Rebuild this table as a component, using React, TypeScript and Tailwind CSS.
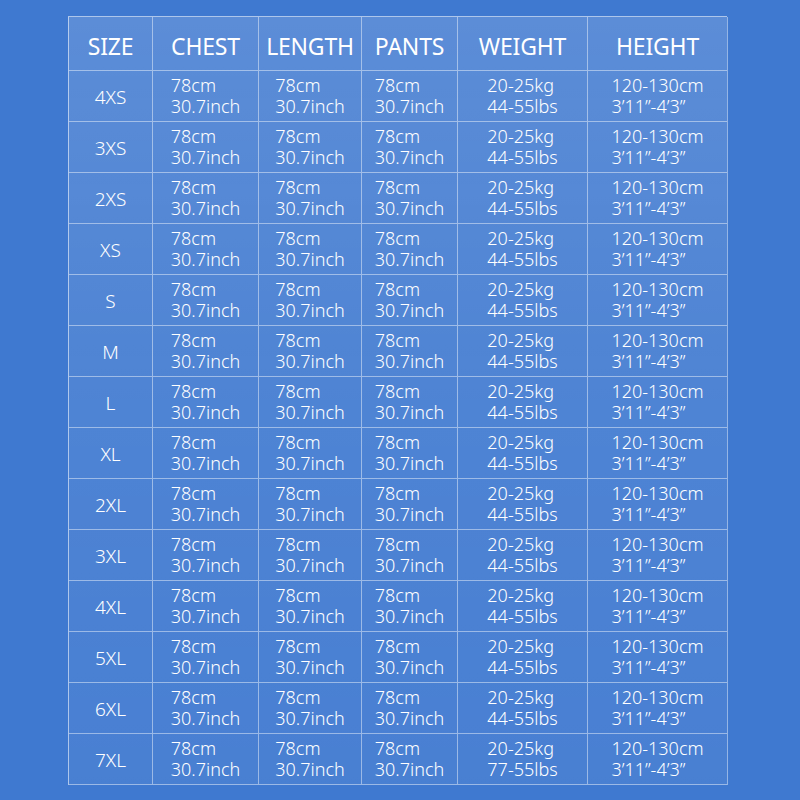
import React from "react";

const HEADERS = ["SIZE", "CHEST", "LENGTH", "PANTS", "WEIGHT", "HEIGHT"];
const SIZES = ["4XS", "3XS", "2XS", "XS", "S", "M", "L", "XL", "2XL", "3XL", "4XL", "5XL", "6XL", "7XL"];

const cell = "flex items-center justify-center border-r border-b border-white/45";

function Pair({ a, b }: { a: string; b: string }) {
  return (
    <div className="text-left leading-[21px]">
      {a}
      <br />
      {b}
    </div>
  );
}

export default function App() {
  return (
    <div
      className="w-[800px] h-[800px] bg-[#3f79d0] pt-[16px] pl-[68px] text-white font-light"
      style={{ fontFamily: '"Noto Sans", "Open Sans", sans-serif' }}
    >
      <div className="grid w-[659px] grid-cols-[84px_106px_103px_96px_130px_140px] grid-rows-[54px_repeat(14,51px)] border-l border-t border-white/55 bg-gradient-to-b from-white/15 via-white/8 to-white/5">
        {HEADERS.map((h) => (
          <div key={h} className={`${cell} pt-[6px] text-[23px] font-normal tracking-[-0.2px]`}>
            {h}
          </div>
        ))}
        {SIZES.map((s, i) => (
          <React.Fragment key={s}>
            <div className={`${cell} pt-[2px] text-[19px]`}>{s}</div>
            <div className={`${cell} text-[18px]`}>
              <Pair a="78cm" b="30.7inch" />
            </div>
            <div className={`${cell} text-[18px]`}>
              <Pair a="78cm" b="30.7inch" />
            </div>
            <div className={`${cell} text-[18px]`}>
              <Pair a="78cm" b="30.7inch" />
            </div>
            <div className={`${cell} text-[18px]`}>
              <Pair a="20-25kg" b={i === SIZES.length - 1 ? "77-55lbs" : "44-55lbs"} />
            </div>
            <div className={`${cell} text-[18px]`}>
              <Pair a="120-130cm" b="3’11”-4’3”" />
            </div>
          </React.Fragment>
        ))}
      </div>
    </div>
  );
}
